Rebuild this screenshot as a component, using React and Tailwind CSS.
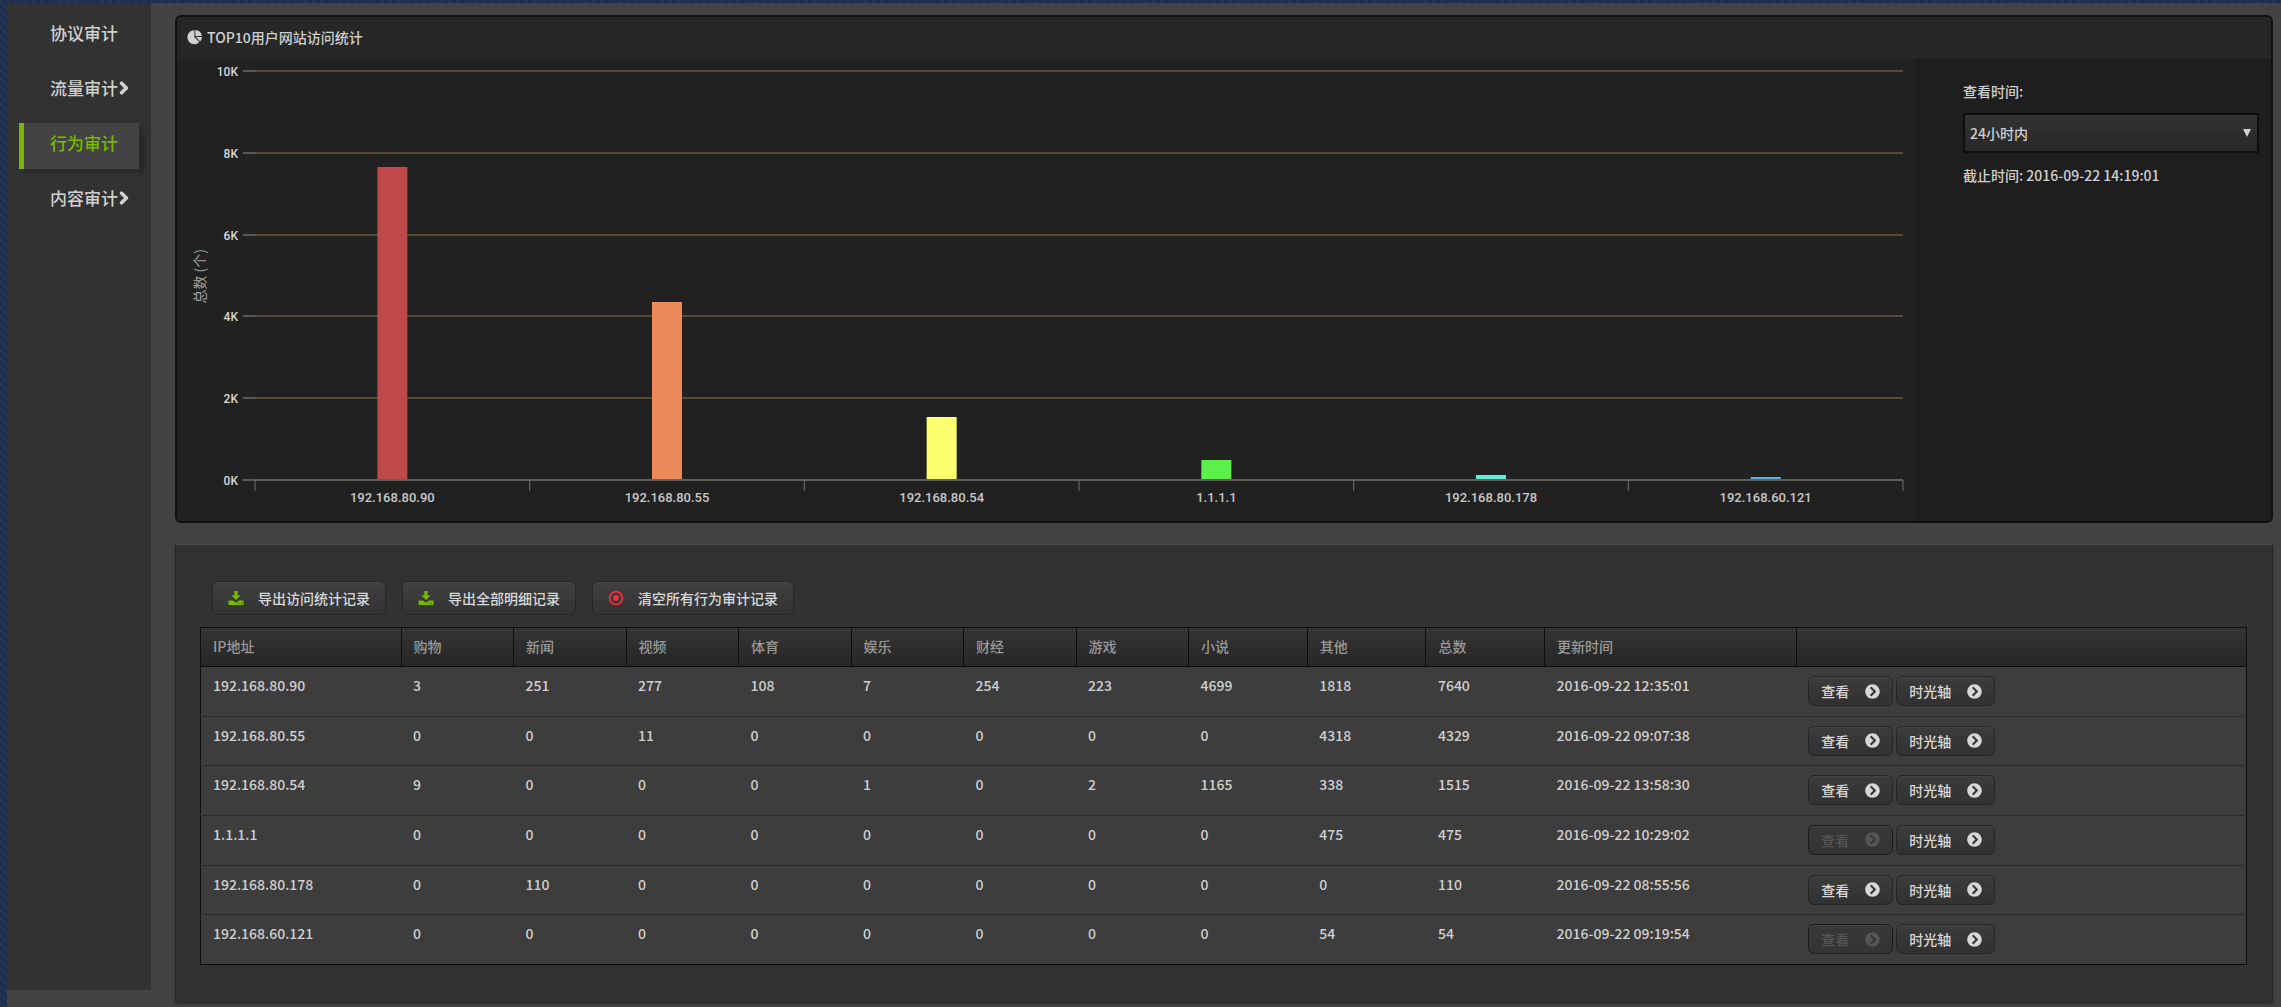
import { FaChevronRight, FaChevronCircleRight } from 'react-icons/fa';

const menu = [
  { name: '协议审计' },
  { name: '流量审计', more: true },
  { name: '行为审计', active: true },
  { name: '内容审计', more: true },
];

const bars = [
  { ip: '192.168.80.90', value: 7640, color: '#c04848' },
  { ip: '192.168.80.55', value: 4329, color: '#ed8a59' },
  { ip: '192.168.80.54', value: 1515, color: '#fcff6e' },
  { ip: '1.1.1.1', value: 475, color: '#5cf04a' },
  { ip: '192.168.80.178', value: 110, color: '#5df0dc' },
  { ip: '192.168.60.121', value: 54, color: '#4fb4f0' },
];

const columns = [
  { title: 'IP地址', width: 'w-[9.8%]' },
  { title: '购物', width: 'w-[5.5%]' },
  { title: '新闻', width: 'w-[5.5%]' },
  { title: '视频', width: 'w-[5.5%]' },
  { title: '体育', width: 'w-[5.5%]' },
  { title: '娱乐', width: 'w-[5.5%]' },
  { title: '财经', width: 'w-[5.5%]' },
  { title: '游戏', width: 'w-[5.5%]' },
  { title: '小说', width: 'w-[5.8%]' },
  { title: '其他', width: 'w-[5.8%]' },
  { title: '总数', width: 'w-[5.8%]' },
  { title: '更新时间', width: 'w-[12.3%]' },
  { title: '', width: '' },
];

const rows = [
  { cells: ['192.168.80.90', 3, 251, 277, 108, 7, 254, 223, 4699, 1818, 7640, '2016-09-22 12:35:01'] },
  { cells: ['192.168.80.55', 0, 0, 11, 0, 0, 0, 0, 0, 4318, 4329, '2016-09-22 09:07:38'] },
  { cells: ['192.168.80.54', 9, 0, 0, 0, 1, 0, 2, 1165, 338, 1515, '2016-09-22 13:58:30'] },
  { cells: ['1.1.1.1', 0, 0, 0, 0, 0, 0, 0, 0, 475, 475, '2016-09-22 10:29:02'], disabled: true },
  { cells: ['192.168.80.178', 0, 110, 0, 0, 0, 0, 0, 0, 0, 110, '2016-09-22 08:55:56'] },
  { cells: ['192.168.60.121', 0, 0, 0, 0, 0, 0, 0, 0, 54, 54, '2016-09-22 09:19:54'], disabled: true },
];

const PLOT = 409;
const TOP = 12;

function PieIcon() {
  return (
    <svg viewBox="0 0 16 16" className="w-4 h-4" fill="currentColor">
      <path d="M7.4 8.2V1.2A7 7 0 1 0 12.4 13.1Z" />
      <path d="M8.4 7.1V1A6.4 6.4 0 0 1 14.9 7.1Z" />
      <path d="M8.8 8.1H15.1A6.8 6.8 0 0 1 13.2 12.4Z" />
    </svg>
  );
}

function DownloadIcon() {
  return (
    <svg viewBox="0 0 16 16" className="w-4 h-4 text-[#76b900]" fill="currentColor">
      <path d="M6.3 1h3.4v4.2h3.1L8 10 3.2 5.2h3.1Z" />
      <path fillRule="evenodd" d="M.5 10.4H5l3 2.4 3-2.4h4.5V15H.5ZM10.5 12.8v1h1v-1ZM13 12.8v1h1v-1Z" />
    </svg>
  );
}

function ClearIcon() {
  return (
    <svg viewBox="0 0 16 16" className="w-4 h-4 text-[#f03036]" fill="none" stroke="currentColor">
      <circle cx="8" cy="8" r="6.4" strokeWidth="1.8" />
      <path d="M5.8 5.8l4.4 4.4M10.2 5.8l-4.4 4.4" strokeWidth="2.8" />
    </svg>
  );
}

function ToolButton({ icon, children }) {
  return (
    <button
      type="button"
      className="flex items-center gap-3.5 h-[34px] px-[15px] rounded-md border border-[#272727] bg-linear-to-b from-[#404040] to-[#333333] shadow-[inset_0_1px_0_#4a4a4a] text-[#d8d8d8]"
    >
      {icon}
      {children}
    </button>
  );
}

function RowButton({ disabled, children }) {
  return (
    <button
      type="button"
      disabled={disabled}
      className="flex items-center gap-4 h-[30px] px-3 rounded-md border border-[#262626] bg-linear-to-b from-[#3c3c3c] to-[#313131] shadow-[inset_0_1px_0_#444444] text-[#d8d8d8] disabled:border-[#1c1c1c] disabled:from-[#383838] disabled:to-[#343434] disabled:text-[#555555]"
    >
      {children}
      <FaChevronCircleRight className="w-[15px] h-[15px]" />
    </button>
  );
}

function Chart() {
  return (
    <svg className="block w-full h-[462px] overflow-visible font-[Roboto,sans-serif]">
      {[10, 8, 6, 4, 2, 0].map((n) => {
        const y = TOP + Math.round(PLOT * (1 - n / 10));
        return (
          <g key={n}>
            <line x1="0" x2="100%" y1={y} y2={y} stroke="#574a32" strokeWidth="2" />
            <line x1="-12" x2="0" y1={y} y2={y} stroke="#585858" strokeWidth="2" />
            <text x="-17" y={y + 5} textAnchor="end" className="text-xs font-medium fill-[#d8d8d8]">{n}K</text>
          </g>
        );
      })}
      {bars.map((bar, i) => {
        const center = `${((i + 0.5) / bars.length) * 100}%`;
        const height = Math.round((bar.value / 10000) * PLOT) + 1;
        return (
          <g key={bar.ip}>
            <rect x={center} y={TOP + PLOT - height} width="30" height={height} transform="translate(-15 0)" fill={bar.color} />
            <text x={center} y={TOP + PLOT + 22} textAnchor="middle" className="text-[13px] fill-[#c8c8c8]">{bar.ip}</text>
          </g>
        );
      })}
      <line x1="0" x2="100%" y1={TOP + PLOT} y2={TOP + PLOT} stroke="#62605c" strokeWidth="2" />
      {[0, 1, 2, 3, 4, 5, 6].map((i) => (
        <line key={i} x1={`${(i / 6) * 100}%`} x2={`${(i / 6) * 100}%`} y1={TOP + PLOT} y2={TOP + PLOT + 11} stroke="#707070" strokeWidth="1" />
      ))}
    </svg>
  );
}

export default function App() {
  return (
    <div className="min-h-screen pt-[3px] pl-[7px] bg-[#22304f] bg-[repeating-linear-gradient(45deg,#1e2b48,#263659_3px,#1e2b48_6px)] font-['Noto_Sans_CJK_SC',sans-serif] font-medium text-sm text-[#d0d0d0]">
      <div className="flex min-h-[calc(100vh-3px)] bg-[#434343]">
        {/* Sidebar */}
        <nav className="w-36 shrink-0 mb-[17px] pt-2.5 px-3 flex flex-col gap-[9px] bg-[#323232] text-[17px]">
          {menu.map((item) => (
            <a
              key={item.name}
              href="#"
              className={
                item.active
                  ? 'flex items-center h-[46px] pb-1.5 pl-[26px] border-l-5 border-[#76b900] bg-[#434343] text-[#76b900] shadow-[5px_5px_3px_#292929]'
                  : 'flex items-center h-[46px] pb-1.5 pl-[31px]'
              }
            >
              {item.name}
              {item.more && (
                <FaChevronRight className="w-3 h-3.5 shrink-0 stroke-current stroke-[50]" />
              )}
            </a>
          ))}
        </nav>

        <main className="flex-1 min-w-0 pt-3 pl-6 pr-2">
          {/* Chart panel */}
          <section className="rounded-md border-2 border-[#111111] bg-[#212121] overflow-hidden">
            <h2 className="flex items-center gap-1 h-[42px] px-2.5 pb-0.5 bg-[#272727]">
              <PieIcon />
              TOP10用户网站访问统计
            </h2>
            <div className="flex">
              <div className="flex flex-1 min-w-0 pr-3">
                <div className="w-[78px] shrink-0 flex items-center pl-3 pb-7">
                  <span className="[writing-mode:vertical-rl] [text-orientation:sideways] rotate-180 font-normal text-[#a0a0a0]">总数 (个)</span>
                </div>
                <div className="flex-1 min-w-0">
                  <Chart />
                </div>
              </div>
              <div className="w-[356px] shrink-0 pt-[22px] pl-12 pr-3 bg-[#1e1e1e]">
                <label htmlFor="range" className="block leading-5">查看时间:</label>
                <div className="relative mt-3">
                  <select id="range" className="block appearance-none w-full h-10 px-[5px] border-2 border-[#0e0e0e] bg-linear-to-b from-[#343434] to-[#272727]">
                    <option>24小时内</option>
                  </select>
                  <svg viewBox="0 0 8 8" className="absolute right-2 top-4 w-2 h-2 pointer-events-none" fill="currentColor">
                    <path d="M0 0h8L4 8Z" />
                  </svg>
                </div>
                <p className="mt-3 leading-5">截止时间: 2016-09-22 14:19:01</p>
              </div>
            </div>
          </section>

          {/* Records */}
          <section className="mt-[21px] pt-9 pb-9 pl-6 pr-[25px] border border-t-[#4a4a4a] border-[#262626] bg-[#323232] shadow-[0_2px_3px_#2b2b2b]">
            <div className="flex gap-4 pl-3">
              <ToolButton icon={<DownloadIcon />}>导出访问统计记录</ToolButton>
              <ToolButton icon={<DownloadIcon />}>导出全部明细记录</ToolButton>
              <ToolButton icon={<ClearIcon />}>清空所有行为审计记录</ToolButton>
            </div>
            <table className="mt-3 w-full h-[338px] table-fixed border-collapse border border-[#0e0e0e] bg-[#3d3d3d] text-left">
              <thead>
                <tr className="h-[39px] bg-linear-to-b from-[#343434] to-[#262626] text-[#999999]">
                  {columns.map((col) => (
                    <th key={col.title} className={`${col.width} px-3 pb-0.5 border border-[#0e0e0e] font-medium`}>{col.title}</th>
                  ))}
                </tr>
              </thead>
              <tbody>
                {rows.map((row) => (
                  <tr key={row.cells[0]} className="border-b border-[#2b2b2b] last:border-[#0e0e0e]">
                    {row.cells.map((cell, i) => (
                      <td key={i} className="px-3 pt-2 align-top">{cell}</td>
                    ))}
                    <td className="px-3 pt-[9px] align-top">
                      <div className="flex gap-[3px]">
                        <RowButton disabled={row.disabled}>查看</RowButton>
                        <RowButton>时光轴</RowButton>
                      </div>
                    </td>
                  </tr>
                ))}
              </tbody>
            </table>
          </section>
        </main>
      </div>
    </div>
  );
}
